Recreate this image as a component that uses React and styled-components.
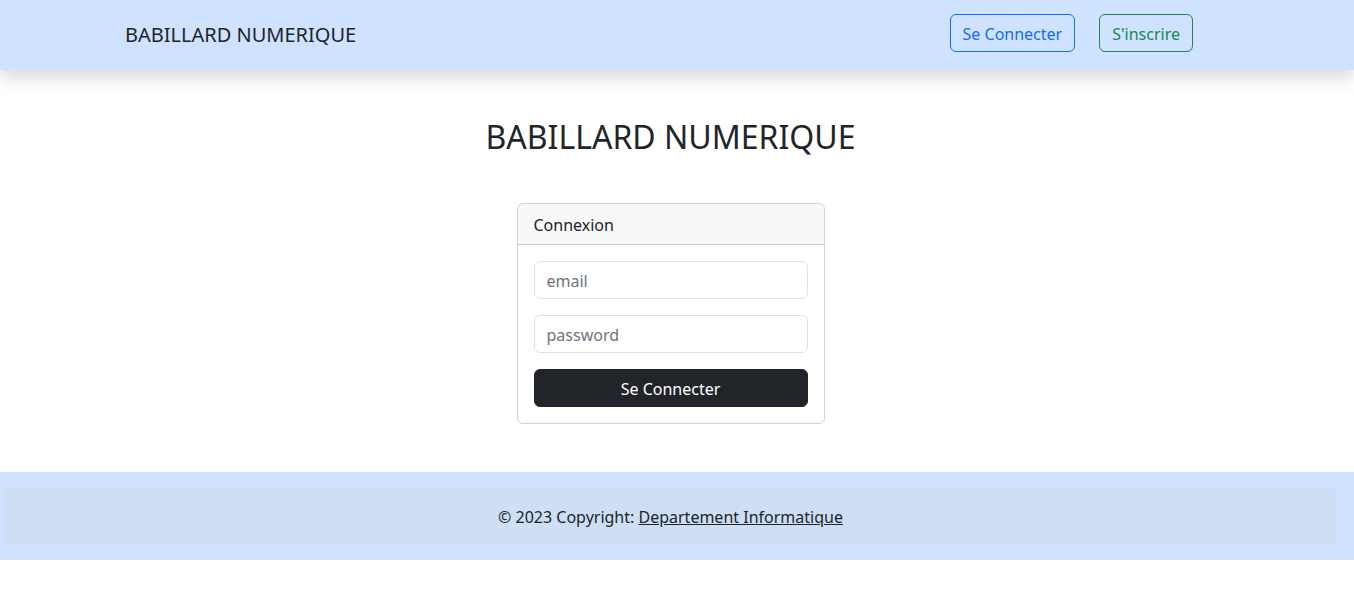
import React from "react";
import styled, { createGlobalStyle } from "styled-components";

const Global = createGlobalStyle`
  * { box-sizing: border-box; }
  body {
    margin: 0;
    font-family: "Noto Sans", "Liberation Sans", sans-serif;
    font-size: 16px;
    line-height: 1.5;
    color: #212529;
    background: #fff;
  }
`;

const Navbar = styled.nav`
  position: relative;
  z-index: 2;
  height: 70px;
  background: #cfe2ff;
  box-shadow: 0 8px 16px rgba(0, 0, 0, 0.15);
`;

const NavInner = styled.div`
  width: 1140px;
  height: 100%;
  margin: 0 auto;
  padding: 0 54px 4px 18px;
  display: flex;
  align-items: center;
  justify-content: space-between;
`;

const Brand = styled.a`
  font-size: 20px;
  line-height: 30px;
  color: #212529;
  text-decoration: none;
  margin-top: 3px;
`;

const NavActions = styled.div`
  display: flex;
  gap: 24px;
  align-items: center;
`;

const OutlineButton = styled.button`
  font-family: inherit;
  font-size: 16px;
  line-height: 24px;
  padding: 7px 12px 5px;
  background: transparent;
  border: 1px solid ${(p) => p.$color};
  color: ${(p) => p.$color};
  border-radius: 6px;
  cursor: pointer;
`;

const Main = styled.main`
  display: flex;
  flex-direction: column;
  align-items: center;
  padding: 48px 17px 48px 4px;
`;

const Title = styled.h1`
  margin: 0 0 47px;
  font-size: 32px;
  font-weight: 400;
  line-height: 1.2;
`;

const Card = styled.div`
  width: 308px;
  border: 1px solid rgba(0, 0, 0, 0.175);
  border-radius: 6px;
  overflow: hidden;
`;

const CardHeader = styled.div`
  padding: 9px 16px 7px;
  background: rgba(33, 37, 41, 0.03);
  border-bottom: 1px solid rgba(0, 0, 0, 0.175);
`;

const CardBody = styled.form`
  padding: 16px;
  display: flex;
  flex-direction: column;
  gap: 16px;
`;

const Input = styled.input`
  display: block;
  width: 100%;
  height: 38px;
  font-family: inherit;
  font-size: 16px;
  line-height: 24px;
  padding: 7px 12px 5px;
  border: 1px solid #dee2e6;
  border-radius: 6px;
  color: #212529;
  background: #fff;
  outline: none;
  &::placeholder {
    color: #6c757d;
    opacity: 1;
  }
`;

const DarkButton = styled.button`
  width: 100%;
  font-family: inherit;
  font-size: 16px;
  line-height: 24px;
  padding: 7px 12px 5px;
  background: #212529;
  border: 1px solid #212529;
  color: #fff;
  border-radius: 6px;
  cursor: pointer;
`;

const Footer = styled.footer`
  background: #cfe2ff;
  padding: 16px 17px 16px 4px;
`;

const FooterInner = styled.div`
  background: #cedef4;
  padding: 17px 16px 15px;
  text-align: center;
  line-height: 24px;
`;

const FooterLink = styled.a`
  color: #212529;
  text-decoration: underline;
`;

export default function App() {
  return (
    <>
      <Global />
      <Navbar>
        <NavInner>
          <Brand href="#">BABILLARD NUMERIQUE</Brand>
          <NavActions>
            <OutlineButton $color="#0d6efd">Se Connecter</OutlineButton>
            <OutlineButton $color="#198754">S'inscrire</OutlineButton>
          </NavActions>
        </NavInner>
      </Navbar>
      <Main>
        <Title>BABILLARD NUMERIQUE</Title>
        <Card>
          <CardHeader>Connexion</CardHeader>
          <CardBody onSubmit={(e) => e.preventDefault()}>
            <Input type="email" placeholder="email" />
            <Input type="password" placeholder="password" />
            <DarkButton type="submit">Se Connecter</DarkButton>
          </CardBody>
        </Card>
      </Main>
      <Footer>
        <FooterInner>
          © 2023 Copyright: <FooterLink href="#">Departement Informatique</FooterLink>
        </FooterInner>
      </Footer>
    </>
  );
}
